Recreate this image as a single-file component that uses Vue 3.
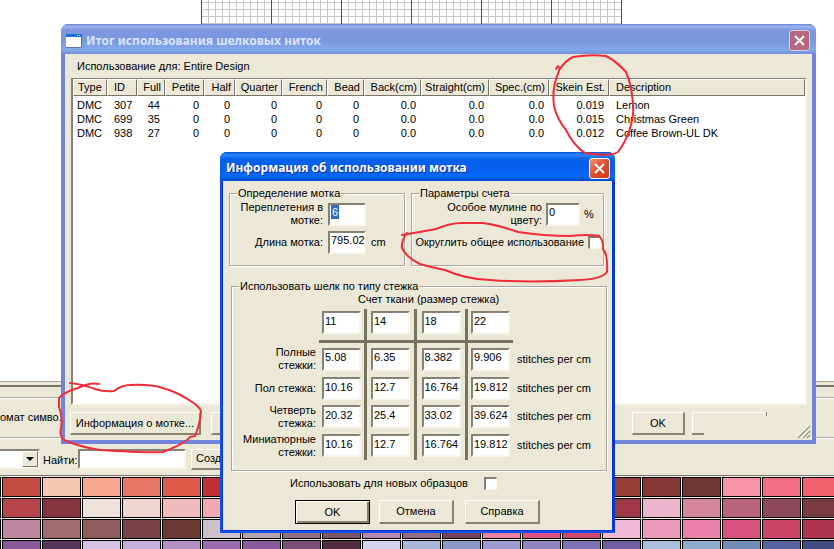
<script setup>
import { ref } from 'vue'

const columns = [
  { name: 'Type', w: 34, num: false },
  { name: 'ID', w: 30, num: false },
  { name: 'Full', w: 28, num: true },
  { name: 'Petite', w: 39, num: true },
  { name: 'Half', w: 31, num: true },
  { name: 'Quarter', w: 47, num: true },
  { name: 'French', w: 45, num: true },
  { name: 'Bead', w: 37, num: true },
  { name: 'Back(cm)', w: 57, num: true },
  { name: 'Straight(cm)', w: 68, num: true },
  { name: 'Spec.(cm)', w: 60, num: true },
  { name: 'Skein Est.', w: 60, num: true },
  { name: 'Description', w: 0, num: false },
]
const threads = [
  ['DMC', '307', '44', '0', '0', '0', '0', '0', '0.0', '0.0', '0.0', '0.019', 'Lemon'],
  ['DMC', '699', '35', '0', '0', '0', '0', '0', '0.0', '0.0', '0.0', '0.015', 'Christmas Green'],
  ['DMC', '938', '27', '0', '0', '0', '0', '0', '0.0', '0.0', '0.0', '0.012', 'Coffee Brown-UL DK'],
]
const counts = ref(['11', '14', '18', '22'])
const stitches = ref([
  { label: 'Полные стежки:', values: ['5.08', '6.35', '8.382', '9.906'] },
  { label: 'Пол стежка:', values: ['10.16', '12.7', '16.764', '19.812'] },
  { label: 'Четверть стежка:', values: ['20.32', '25.4', '33.02', '39.624'] },
  { label: 'Миниатюрные стежки:', values: ['10.16', '12.7', '16.764', '19.812'] },
])
const strands = ref('6')
const skein = ref('795.02')
const special = ref('0')
const search = ref('')
const swatches = [
  ['#a03a38', '#c04c42', '#f5c9b3', '#f7a690', '#e67863', '#dd5a4a', '#c02f33', '#b02a30', '#a02a30', '#902a30', '#f0a090', '#e08070', '#d06050', '#c05040', '#b04840', '#a04038', '#963d38', '#853833', '#6f3733', '#f593a7', '#f06f85', '#f2606e'],
  ['#c04c52', '#b5454b', '#87353c', '#eee2dc', '#efd6d2', '#f0babc', '#f1a8b0', '#e890a0', '#e08090', '#d07080', '#c06070', '#b05060', '#a04050', '#f0a0b0', '#d06070', '#b04050', '#a03847', '#ebb4ca', '#d4879c', '#b8647b', '#8e4659', '#7a3a42'],
  ['#d49ab0', '#c0889e', '#9f6b6e', '#8e5c5c', '#7a4248', '#6c3934', '#cbc1cc', '#b5a2b2', '#91737f', '#7d5566', '#b688b0', '#966a8a', '#73435f', '#ec7fa4', '#dd5683', '#cf466e', '#f0b8d4', '#ec9abb', '#eb80a8', '#d9527d', '#cc446a', '#b03552'],
  ['#9a6cae', '#875996', '#56365a', '#d5c3e6', '#c6aedf', '#b591c4', '#9a6cae', '#8a5b9d', '#7b5077', '#522d3f', '#d2d4ec', '#a9b7da', '#8b98c5', '#9d9bd2', '#8d84c0', '#7e72b5', '#6e5fa3', '#a9bfde', '#90abce', '#748db8', '#56639f', '#434c80'],
]
</script>

<template>
  <main class="desktop">
    <section class="canvas">
      <svg class="chart" width="422" height="24" viewBox="0 0 422 24" shape-rendering="crispEdges" aria-hidden="true">
        <path class="fine" d="M0 2.5H421M0 9.5H421M0 16.5H421M0 23.5H421" />
        <g v-for="n in 60" :key="n">
          <path class="fine" :d="`M${n * 7 + 0.5} 0V24`" />
        </g>
        <path class="bold" d="M.5 0V24M70.5 0V24M140.5 0V24M210.5 0V24M280.5 0V24M350.5 0V24M420.5 0V24" />
      </svg>
    </section>

    <section class="workbench">
      <div class="strip"></div>
      <div class="format"><span>омат симво.</span></div>
      <div class="finder">
        <div class="combo"><button type="button" aria-label="Список"><i></i></button></div>
        <label for="find">Найти:</label>
        <input id="find" v-model="search" class="sunk" type="text" />
        <button type="button" class="btn create">Создать</button>
      </div>
      <div class="palette">
        <div v-for="(row, r) in swatches" :key="r" class="swatch-row">
          <i v-for="(c, k) in row" :key="k" :style="{ background: c }"></i>
        </div>
      </div>
    </section>

    <section class="window summary">
      <header>
        <svg width="16" height="14" viewBox="0 0 16 14" aria-hidden="true">
          <rect width="16" height="14" fill="#fff" />
          <rect width="16" height="3" fill="#1b70dc" />
          <path d="M11 1.500h1M13 1.500h1" stroke="#fff" />
          <path d="M0 13.500H15.500V3" fill="none" stroke="#5c6fae" />
        </svg>
        <h1>Итог использования шелковых ниток</h1>
        <button type="button" class="close" aria-label="Закрыть">
          <svg viewBox="0 0 19 19" width="19" height="19"><path d="M5 5l9 9M14 5l-9 9" /></svg>
        </button>
      </header>
      <div class="content">
        <p>Использование для: Entire Design</p>
        <div class="list">
          <table>
            <colgroup>
              <col v-for="c in columns" :key="c.name" :style="c.w ? { width: c.w + 'px' } : {}" />
            </colgroup>
            <thead>
              <tr><th v-for="c in columns" :key="c.name" :class="{ num: c.num }">{{ c.name }}</th></tr>
            </thead>
            <tbody>
              <tr v-for="t in threads" :key="t[1]">
                <td v-for="(v, i) in t" :key="i" :class="{ num: columns[i].num }">{{ v }}</td>
              </tr>
            </tbody>
          </table>
        </div>
        <footer>
          <button type="button" class="btn info">Информация о мотке...</button>
          <button type="button" class="btn blank" aria-label="Печать"></button>
          <button type="button" class="btn ok">OK</button>
          <button type="button" class="ghost" aria-label="Справка"></button>
          <svg class="grip" width="14" height="14" viewBox="0 0 14 14" aria-hidden="true">
            <path d="M0 13L13 0M5 13L13 5M9 13L13 9" stroke="#fff" transform="translate(-1 0)" />
            <path d="M1 13L13 1M6 13L13 6M10 13L13 10" stroke="#9d9a88" stroke-width="1.500" />
          </svg>
        </footer>
      </div>
    </section>

    <section class="window dialog">
      <header>
        <h2>Информация об использовании мотка</h2>
        <button type="button" class="close" aria-label="Закрыть">
          <svg viewBox="0 0 19 19" width="19" height="19"><path d="M5 5l9 9M14 5l-9 9" /></svg>
        </button>
      </header>
      <form class="content" @submit.prevent>
        <div class="pair">
          <fieldset class="skein">
            <legend>Определение мотка</legend>
            <div class="field">
              <label for="strands">Переплетения в мотке:</label>
              <span class="sunk marked"><input id="strands" v-model="strands" type="text" /></span>
            </div>
            <div class="field">
              <label for="length">Длина мотка:</label>
              <input id="length" v-model="skein" class="sunk" type="text" />
              <span>cm</span>
            </div>
          </fieldset>
          <fieldset class="params">
            <legend>Параметры счета</legend>
            <div class="field">
              <label for="special">Особое мулине по цвету:</label>
              <input id="special" v-model="special" class="sunk" type="text" />
              <span>%</span>
            </div>
            <div class="field round">
              <label for="round">Округлить общее использование</label>
              <input id="round" type="checkbox" />
            </div>
          </fieldset>
        </div>
        <fieldset class="usage">
          <legend>Использовать шелк по типу стежка</legend>
          <p>Счет ткани (размер стежка)</p>
          <div class="matrix">
            <i class="vbar b1"></i><i class="vbar b2"></i><i class="vbar b3"></i><i class="hbar"></i>
            <div class="mrow r0">
              <input v-for="(c, i) in counts" :key="i" v-model="counts[i]" class="sunk" :class="'c' + i" type="text" aria-label="Счет ткани" />
            </div>
            <div v-for="(s, r) in stitches" :key="s.label" class="mrow" :class="'r' + (r + 1)">
              <label :for="'s' + r + '0'">{{ s.label }}</label>
              <input v-for="(v, i) in s.values" :id="'s' + r + i" :key="i" v-model="s.values[i]" class="sunk" :class="'c' + i" type="text" :aria-label="s.label" />
              <span>stitches per cm</span>
            </div>
          </div>
        </fieldset>
        <div class="fresh">
          <label for="fresh">Использовать для новых образцов</label>
          <input id="fresh" type="checkbox" />
        </div>
        <div class="actions">
          <button type="submit" class="btn default">OK</button>
          <button type="button" class="btn">Отмена</button>
          <button type="button" class="btn help">Справка</button>
        </div>
      </form>
    </section>

    <svg class="marks" width="834" height="549" viewBox="0 0 834 549" aria-hidden="true">
      <path d="M556 69L558 66L560 69Q565 61 573 57Q590 54 606 56Q616 61 626 72Q631 84 632 95Q635 112 631 125Q627 140 618 152Q610 157 585 153Q574 146 566 130Q557 119 554 106Q552 92 556 79L560 68" />
      <path d="M402 235Q420 232 436 229Q450 223 462 223H483Q498 225 518 232Q545 236 570 236Q588 234 599 236Q604 241 603 249Q608 255 607 272Q602 279 580 280Q530 283 490 280Q465 279 445 270Q430 267 420 264Q406 257 402 248Q401 241 407 233" />
      <path d="M70 383Q86 385 95 389Q104 392 114 391Q122 385 130 385Q150 384 163 388Q180 393 195 404Q201 409 201 412Q200 424 195 436L190 437Q186 443 163 452Q145 453 100 450Q80 447 64 440Q59 436 61 428Q63 418 59 407V398Q66 391 78 388Q90 382 99 384" />
    </svg>
  </main>
</template>

<style>
body {
  overflow: hidden;
}
</style>

<style scoped>
* {
  box-sizing: border-box;
}
.desktop {
  position: relative;
  display: flex;
  flex-direction: column;
  height: 100vh;
  overflow: hidden;
  background: #fff;
  font: 11px/13px "Liberation Sans", Arial, sans-serif;
  color: #000;
}
h1, h2, p, fieldset, legend {
  margin: 0;
  padding: 0;
}
button, input {
  font: inherit;
  color: inherit;
  padding: 0;
  margin: 0;
  border-radius: 0;
}
.canvas {
  height: 381px;
  flex: none;
  padding-left: 201px;
}
.chart {
  display: block;
}
.fine {
  stroke: #c6c6c6;
}
.bold {
  stroke: #4e4e4e;
}
.workbench {
  flex: 1;
  background: #ebe8d8;
  border-top: 1px solid #a8a594;
}
.strip {
  height: 5px;
  border-bottom: 2px solid #77746a;
}
.format {
  height: 41px;
  margin-top: 10px;
  padding-top: 13px;
  border-top: 1px solid #aaa798;
  border-bottom: 1px solid #aaa798;
  box-shadow: inset 0 1px #fff, 0 1px #fff;
}
.finder {
  display: flex;
  align-items: center;
  height: 37px;
  padding-top: 5px;
}
.combo {
  display: flex;
  justify-content: flex-end;
  width: 40px;
  height: 20px;
  margin-right: 3px;
  background: #fff;
  border: 2px solid #858275;
  border-left: 0;
  border-right-color: #f6f4ec;
  border-bottom-color: #f6f4ec;
}
.combo button {
  display: grid;
  place-items: center;
  width: 16px;
  background: #ebe8d8;
  border: 1px solid #fff;
  border-right-color: #77746a;
  border-bottom-color: #77746a;
}
.combo i {
  border: 4px solid transparent;
  border-top-color: #000;
  border-bottom: 0;
}
.finder label {
  width: 35px;
  padding-top: 2px;
}
.sunk {
  background: #fff;
  border: 2px solid #858275;
  border-right-color: #f8f6ee;
  border-bottom-color: #f8f6ee;
  outline: 0;
}
.finder .sunk {
  width: 108px;
  height: 20px;
}
.btn {
  background: #ebe8d8;
  border: 1px solid #fff;
  border-right: 2px solid #86836f;
  border-bottom: 2px solid #86836f;
  text-align: center;
}
.create {
  width: 75px;
  height: 21px;
  margin-left: 5px;
  text-align: left;
  padding-left: 4px;
}
.palette {
  display: flex;
  flex-direction: column;
  gap: 1px;
  border-top: 1px solid #77746a;
  padding-top: 1px;
  overflow: hidden;
  background: #f6efe6;
}
.swatch-row {
  display: flex;
  gap: 1px;
  margin-left: -38px;
}
.swatch-row i {
  flex: none;
  width: 39px;
  height: 20px;
  border: 1px solid #000;
}
.window {
  position: absolute;
  display: flex;
  flex-direction: column;
}
.window header {
  display: flex;
  align-items: center;
  flex: none;
}
.window h1, .window h2 {
  flex: 1;
  font: bold 12px/16px "Noto Sans", "Open Sans", sans-serif;
  white-space: nowrap;
}
.window .content {
  flex: 1;
  display: flex;
  flex-direction: column;
  background: #ebe8d8;
}
.close {
  display: grid;
  place-items: center;
  width: 21px;
  height: 21px;
  border: 1px solid #fff;
  border-radius: 3px;
}
.close path {
  stroke: #fff;
  stroke-width: 2;
  fill: none;
}
.summary {
  left: 61px;
  top: 24px;
  right: 18px;
  height: 420px;
  padding: 0 4px 4px;
  border-radius: 7px 7px 0 0;
  background: #7283dc;
}
.summary header {
  height: 30px;
  margin: 0 -4px;
  padding: 3px 6px 0 5px;
  gap: 4px;
  border-radius: 7px 7px 0 0;
  background: linear-gradient(#6c82d8, #9db4ee 8%, #7d96e0 20%, #7b97e0 55%, #82a8ea 85%, #7490d8);
}
.summary h1 {
  color: #dbe5fa;
}
.summary .close {
  background: #b5677c;
  border-color: #d9cbe4;
}
.summary p {
  padding: 6px 12px 5px;
}
.list {
  flex: 1;
  margin: 0 5px 0 6px;
  background: #fff;
  border: 2px solid #858275;
  border-top-width: 1px;
  border-right-color: #f8f6ee;
  border-bottom-color: #f8f6ee;
}
table {
  width: 100%;
  table-layout: fixed;
  border-collapse: separate;
  border-spacing: 0;
}
th {
  height: 17px;
  padding: 0 5px 0 6px;
  font-weight: normal;
  text-align: left;
  white-space: nowrap;
  background: #ebe8d8;
  border: 1px solid #fff;
  border-right-color: #77746a;
  border-bottom-color: #77746a;
}
td {
  height: 14px;
  padding: 0 5px 0 7px;
  white-space: nowrap;
}
th:first-child, td:first-child {
  padding-left: 4px;
}
th.num, td.num {
  text-align: right;
  padding-left: 0;
}
th.num {
  padding-right: 3px;
}
tbody tr:first-child td {
  height: 16px;
  padding-top: 2px;
}
.summary footer {
  display: flex;
  height: 35px;
  padding: 7px 0 0 5px;
}
.summary footer .btn {
  height: 23px;
}
.info {
  width: 131px;
}
.blank {
  width: 75px;
  margin-left: 10px;
}
.ok {
  width: 53px;
  margin-left: auto;
}
.ghost {
  width: 75px;
  height: 23px;
  margin-left: 7px;
  border: 0;
  background:
    linear-gradient(#86836f, #86836f) right top / 1px 4px no-repeat,
    linear-gradient(#86836f, #86836f) left bottom / 12px 2px no-repeat,
    linear-gradient(#fff, #fff) left top / 100% 1px no-repeat,
    linear-gradient(#fff, #fff) left top / 1px 100% no-repeat;
}
.grip {
  align-self: flex-end;
  margin: 0 1px 1px 30px;
}
.dialog {
  left: 220px;
  top: 152px;
  width: 395px;
  padding: 0 3px 3px;
  border-radius: 7px 7px 0 0;
  background: #0638cf;
  box-shadow: inset 2px -2px #0b50ea;
}
.dialog header {
  height: 29px;
  margin: 0 -3px;
  padding: 3px 5px 0 6px;
  border-radius: 7px 7px 0 0;
  background: linear-gradient(#0a4fd0, #2a86f8 10%, #0560ea 25%, #0560f0 60%, #0468fb 85%, #0348c8);
}
.dialog h2 {
  color: #fff;
  text-shadow: 1px 1px #0a2f9a;
}
.dialog .close {
  background: linear-gradient(135deg, #ec8f74, #dd4f2c 50%, #c83a18);
}
.dialog .content {
  padding: 6px 5px 6px 6px;
}
fieldset {
  min-width: 0;
  border: 1px solid #aaa798;
  box-shadow: 1px 1px #fff, inset 1px 1px #fff;
}
legend {
  margin-left: 7px;
  padding: 0 1px;
  background: #ebe8d8;
}
.pair {
  display: flex;
  gap: 6px;
}
.skein {
  width: 176px;
  height: 79px;
}
.params {
  width: 193px;
  height: 79px;
}
.field {
  display: flex;
  align-items: center;
  height: 28px;
  gap: 5px;
}
.field label {
  width: 93px;
  text-align: right;
}
.field .sunk {
  width: 38px;
  height: 23px;
}
.params .field {
  gap: 4px;
}
.params .field label {
  width: 130px;
  padding-left: 30px;
}
.params .field .sunk {
  width: 34px;
}
.params .field.round label {
  width: 172px;
  padding-left: 0;
  white-space: nowrap;
}
.dialog .sunk {
  padding: 0 0 4px 1px;
}
.marked {
  display: block;
}
.marked input {
  display: block;
  width: 8px;
  height: 14px;
  border: 0;
  outline: 0;
  background: #316ac5;
  color: #fff;
  padding-left: 1px;
}
input[type="checkbox"] {
  appearance: none;
  flex: none;
  width: 13px;
  height: 13px;
  background: #fff;
  border: 2px solid #858275;
  border-right: 1px solid #f8f6ee;
  border-bottom: 1px solid #f8f6ee;
}
.usage {
  margin: 14px 0 0 2px;
  height: 191px;
}
.usage p {
  padding-left: 126px;
}
.matrix {
  display: grid;
  grid-template-columns: 84px 3px 45px 3px 47px 3px 48px 3px 45px 1fr;
  grid-template-rows: 31px 3px 32px 27px 29px 29px;
  margin-top: 3px;
}
.mrow {
  display: contents;
}
.mrow > * {
  align-self: center;
}
.mrow label {
  grid-column: 1;
  justify-self: end;
  width: 75px;
  text-align: right;
}
.mrow .sunk {
  width: 39px;
  height: 23px;
  justify-self: center;
}
.c0 { grid-column: 3; }
.c1 { grid-column: 5; }
.c2 { grid-column: 7; }
.c3 { grid-column: 9; }
.mrow span {
  grid-column: 10;
  padding-left: 4px;
}
.r0 > * {
  grid-row: 1;
  align-self: start;
  margin-top: 2px;
}
.r1 > * { grid-row: 3; }
.r2 > * { grid-row: 4; }
.r3 > * { grid-row: 5; }
.r4 > * { grid-row: 6; }
.vbar, .hbar {
  background: #77735f;
}
.vbar {
  grid-row: 1 / 7;
}
.b1 { grid-column: 4; }
.b2 { grid-column: 6; }
.b3 { grid-column: 8; }
.hbar {
  grid-row: 2;
  grid-column: 3 / 10;
}
.fresh {
  display: flex;
  align-items: center;
  gap: 16px;
  height: 13px;
  margin: 6px 0 0 61px;
}
.actions {
  display: flex;
  gap: 9px;
  margin: 10px 0 0 66px;
}
.actions .btn {
  width: 75px;
  height: 24px;
}
.actions .default {
  border: 1px solid #000;
  box-shadow: inset 1px 1px #fff, inset -2px -2px #86836f;
}
.actions .help {
  margin-left: 2px;
}
.marks {
  position: absolute;
  left: 0;
  top: 0;
  pointer-events: none;
}
.marks path {
  fill: none;
  stroke: #f02c38;
  stroke-width: 2;
  stroke-linejoin: round;
  stroke-linecap: round;
}
</style>
